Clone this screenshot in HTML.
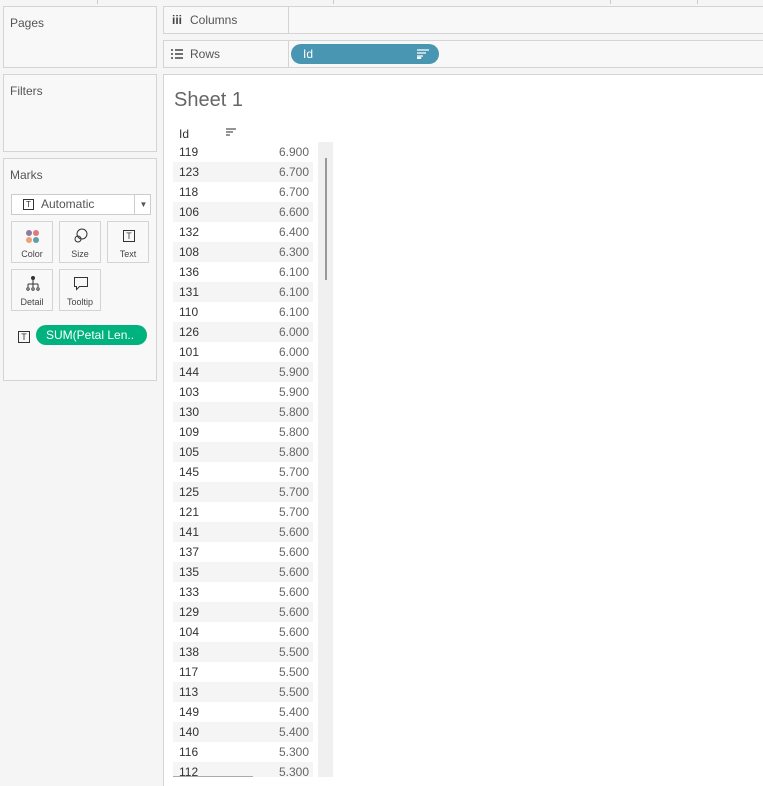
<!DOCTYPE html><html><head><style>
body{margin:0;width:763px;height:785px;background:#f5f5f5;font-family:"Liberation Sans",sans-serif;position:relative;overflow:hidden;color:#333}
.box{position:absolute;background:#f8f8f8;border:1px solid #d4d4d4;box-sizing:border-box}
.t{position:absolute;font-size:12px;color:#555}
.card{position:absolute;width:42px;height:42px;border:1px solid #d4d4d4;background:#f8f8f8;box-sizing:border-box;font-size:9px;color:#444;text-align:center}
.card span{position:absolute;bottom:3px;left:0;right:0}
.row{position:absolute;left:173px;width:140px;height:20px;font-size:12px;line-height:21px}
.row b{font-weight:normal;position:absolute;left:6px;color:#333}
.row i{font-style:normal;position:absolute;right:4px;color:#666}
</style></head><body>
<div style="position:absolute;left:97px;top:0;width:1px;height:4px;background:#ccc"></div>
<div style="position:absolute;left:333px;top:0;width:1px;height:4px;background:#ccc"></div>
<div style="position:absolute;left:610px;top:0;width:1px;height:4px;background:#ccc"></div>
<div style="position:absolute;left:697px;top:0;width:1px;height:4px;background:#ccc"></div>
<div class="box" style="left:3px;top:6px;width:154px;height:62px"><div class="t" style="left:6px;top:9px">Pages</div></div>
<div class="box" style="left:3px;top:74px;width:154px;height:78px"><div class="t" style="left:6px;top:9px">Filters</div></div>
<div class="box" style="left:3px;top:158px;width:154px;height:223px"><div class="t" style="left:6px;top:9px">Marks</div>
<div style="position:absolute;left:7px;top:35px;width:140px;height:21px;border:1px solid #ccc;background:#fff;box-sizing:border-box;font-size:12px;color:#555;line-height:19px">
<span style="position:absolute;left:11px;top:4px;width:9px;height:9px;border:1px solid #333;font-size:8px;line-height:9px;text-align:center;color:#333">T</span>
<span style="position:absolute;left:29px">Automatic</span>
<span style="position:absolute;left:122px;top:0;height:19px;border-left:1px solid #ccc;width:17px;text-align:center;font-size:8px;color:#555">▼</span></div>
<div class="card" style="left:7px;top:62px"><svg style="position:absolute;left:13px;top:7px" width="16" height="16"><circle cx="4" cy="4" r="3" fill="#8e7aa0"/><circle cx="11" cy="4" r="3" fill="#e0797f"/><circle cx="4" cy="11" r="3" fill="#f0a070"/><circle cx="11" cy="11" r="3" fill="#5f9fa8"/></svg><span>Color</span></div>
<div class="card" style="left:55px;top:62px"><svg style="position:absolute;left:13px;top:6px" width="16" height="16" fill="none" stroke="#333"><circle cx="9" cy="6" r="5"/><circle cx="5" cy="11" r="3"/></svg><span>Size</span></div>
<div class="card" style="left:103px;top:62px"><div style="position:absolute;left:15px;top:8px;width:10px;height:10px;border:1px solid #333;font-size:9px;line-height:10px">T</div><span>Text</span></div>
<div class="card" style="left:7px;top:110px"><svg style="position:absolute;left:13px;top:6px" width="16" height="16" fill="none" stroke="#333"><circle cx="8" cy="2" r="1.5" fill="#333"/><path d="M8 3v5M3 8h10M3 8v3M8 8v3M13 8v3"/><circle cx="3" cy="13" r="1.2"/><circle cx="8" cy="13" r="1.2"/><circle cx="13" cy="13" r="1.2"/></svg><span>Detail</span></div>
<div class="card" style="left:55px;top:110px"><svg style="position:absolute;left:13px;top:6px" width="16" height="16" fill="none" stroke="#333"><path d="M1.5 1.5h13v9h-8l-3 3v-3h-2z"/></svg><span>Tooltip</span></div>
<div style="position:absolute;left:14px;top:172px;width:10px;height:10px;border:1px solid #333;font-size:9px;line-height:10px;text-align:center">T</div>
<div style="position:absolute;left:32px;top:166px;width:111px;height:20px;border-radius:10px;background:#00b27d;color:#fff;font-size:12px;line-height:20px;padding-left:10px;box-sizing:border-box">SUM(Petal Len..</div>
</div>
<div class="box" style="left:163px;top:6px;width:610px;height:28px"><div style="position:absolute;left:124px;top:0;width:1px;height:26px;background:#d4d4d4"></div>
<div class="t" style="left:8px;top:6px;font-weight:bold;color:#444">iii</div><div class="t" style="left:26px;top:6px">Columns</div></div>
<div class="box" style="left:163px;top:40px;width:610px;height:28px"><div style="position:absolute;left:124px;top:0;width:1px;height:26px;background:#d4d4d4"></div>
<svg style="position:absolute;left:7px;top:8px" width="12" height="10" stroke="#444" stroke-width="1.5"><path d="M0 1h2M4 1h8M0 5h2M4 5h8M0 9h2M4 9h8"/></svg>
<div class="t" style="left:26px;top:6px">Rows</div>
<div style="position:absolute;left:127px;top:3px;width:148px;height:20px;border-radius:10px;background:#4996b2;color:#fff;font-size:12px;line-height:20px"><span style="position:absolute;left:12px">Id</span>
<svg style="position:absolute;left:126px;top:5px" width="12" height="10" stroke="#fff" stroke-width="1.3" fill="none"><path d="M0 1h12M0 4h9M0 7h6"/><rect x="0.5" y="8.5" width="3" height="1"/></svg></div></div>
<div style="position:absolute;left:163px;top:74px;width:600px;height:711px;background:#fff;border-left:1px solid #d4d4d4;border-top:1px solid #d4d4d4"></div>
<div style="position:absolute;left:174px;top:89px;font-size:20px;color:#666">Sheet 1</div>
<div style="position:absolute;left:179px;top:127px;font-size:12px;color:#333">Id</div>
<svg style="position:absolute;left:226px;top:128px" width="10" height="9" stroke="#555" stroke-width="1.3"><path d="M0 1h10M0 4h7M0 7h4"/></svg>
<div style="position:absolute;left:173px;top:142px;width:140px;height:1px;background:#ccc"></div>
<div style="position:absolute;left:318px;top:142px;width:15px;height:635px;background:#f0f0f0"></div>
<div style="position:absolute;left:325px;top:158px;width:2px;height:122px;background:#999"></div>
<div id="rows"></div>
<script>
var d=[[119,"6.900"],[123,"6.700"],[118,"6.700"],[106,"6.600"],[132,"6.400"],[108,"6.300"],[136,"6.100"],[131,"6.100"],[110,"6.100"],[126,"6.000"],[101,"6.000"],[144,"5.900"],[103,"5.900"],[130,"5.800"],[109,"5.800"],[105,"5.800"],[145,"5.700"],[125,"5.700"],[121,"5.700"],[141,"5.600"],[137,"5.600"],[135,"5.600"],[133,"5.600"],[129,"5.600"],[104,"5.600"],[138,"5.500"],[117,"5.500"],[113,"5.500"],[149,"5.400"],[140,"5.400"],[116,"5.300"],[112,"5.300"]];
var h="";d.forEach(function(r,i){var top=142+i*20;var ht=Math.min(20,777-top);h+='<div class="row" style="top:'+top+'px;height:'+ht+'px;overflow:hidden;background:'+(i%2?'#f5f5f5':'#fff')+'"><b>'+r[0]+'</b><i>'+r[1]+'</i></div>';});
document.getElementById("rows").innerHTML=h;
</script>
<div style="position:absolute;left:173px;top:776px;width:80px;height:1px;background:#aaa"></div>
</body></html>
